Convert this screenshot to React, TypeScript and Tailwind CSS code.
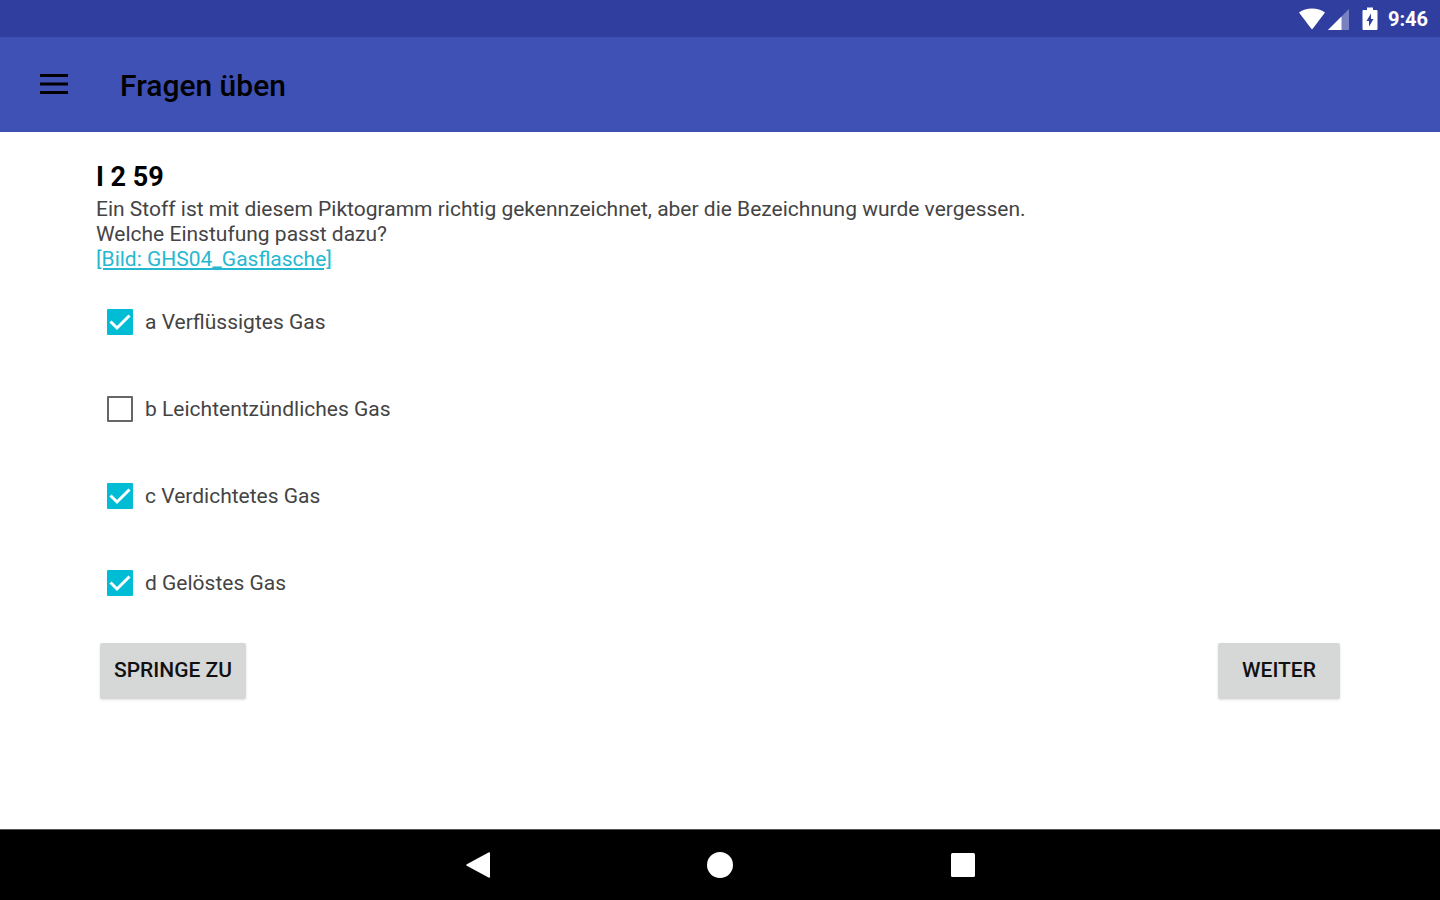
import { useState } from "react";

const answers = [
  { id: "a", text: "Verflüssigtes Gas", checked: true },
  { id: "b", text: "Leichtentzündliches Gas", checked: false },
  { id: "c", text: "Verdichtetes Gas", checked: true },
  { id: "d", text: "Gelöstes Gas", checked: true },
];

function StatusBar() {
  return (
    <div className="flex h-[37px] items-center justify-end bg-[#303f9f] pr-3 text-white">
      <svg className="h-6 w-7" viewBox="0 0 28 24" fill="currentColor" aria-hidden="true">
        <path d="M1 5.500C8 .2 20 .2 27 5.500L14.700 21.800q-.7.800-1.400 0z" />
      </svg>
      <svg className="h-6 w-6" viewBox="0 0 24 24" fill="currentColor" aria-hidden="true">
        <path d="M23 2v21H2z" opacity=".35" />
        <path d="M15.500 9.500V23H2z" />
      </svg>
      <svg className="ml-2 h-6 w-6" viewBox="0 0 24 24" fill="currentColor" aria-hidden="true">
        <path
          fillRule="evenodd"
          d="M9 .5h6V3h3.500q1 0 1 1V22q0 1-1 1h-13q-1 0-1-1V4q0-1 1-1H9zM13 6.500 8.500 14H11v5.500l4.500-7.500H13z"
        />
      </svg>
      <span className="ml-1.5 text-xl font-bold">9:46</span>
    </div>
  );
}

function AppBar() {
  return (
    <header className="flex h-[95px] items-center bg-[#3f51b5] pl-10 text-black">
      <button type="button" aria-label="Menü" className="mr-[52px]">
        <svg className="h-6 w-7" viewBox="0 0 28 24" fill="currentColor" aria-hidden="true">
          <path d="M0 1h28v3H0zM0 9.500h28v3H0zM0 18h28v3H0z" />
        </svg>
      </button>
      <h1 className="pt-0.5 text-[30px] font-medium">Fragen üben</h1>
    </header>
  );
}

function NavBar() {
  return (
    <nav className="flex h-[71px] items-center justify-center gap-[214px] border-t border-[#555] bg-black text-white">
      <button type="button" aria-label="Zurück">
        <svg className="size-7" viewBox="0 0 28 28" fill="currentColor" aria-hidden="true">
          <path d="M24.500 1.500q1.500-.8 1.500.8v23.400q0 1.600-1.500.8L2.800 14.800q-1.300-.8 0-1.600z" />
        </svg>
      </button>
      <button type="button" aria-label="Startbildschirm">
        <svg className="size-7" viewBox="0 0 28 28" fill="currentColor" aria-hidden="true">
          <circle cx="14" cy="14" r="13" />
        </svg>
      </button>
      <button type="button" aria-label="Übersicht">
        <svg className="size-7" viewBox="0 0 28 28" fill="currentColor" aria-hidden="true">
          <rect x="3" y="2" width="24" height="24" rx="1.500" />
        </svg>
      </button>
    </nav>
  );
}

export default function App() {
  const [selected, setSelected] = useState(
    answers.filter((a) => a.checked).map((a) => a.id)
  );

  const toggle = (id: string) => {
    setSelected((prev) =>
      prev.includes(id) ? prev.filter((x) => x !== id) : [...prev, id]
    );
  };

  return (
    <div className="flex min-h-screen flex-col bg-white font-[Roboto,sans-serif]">
      <StatusBar />
      <AppBar />
      <main className="flex-1 px-24 pt-[29px] pb-8">
        <h2 className="mb-1 text-[27px] leading-8 font-bold text-black">I 2 59</h2>
        <p className="text-[21px] leading-[25px] text-[#444]">
          Ein Stoff ist mit diesem Piktogramm richtig gekennzeichnet, aber die
          Bezeichnung wurde vergessen.
          <br />
          Welche Einstufung passt dazu?
          <br />
          <a href="#bild" className="text-[#26b8d0] underline">
            [Bild: GHS04_Gasflasche]
          </a>
        </p>

        <div className="mt-1.5">
          {answers.map((answer) => (
            <label
              key={answer.id}
              className="flex h-[87px] items-center gap-3 pl-[11px] text-[21px] text-[#444]"
            >
              <span className="grid">
                <input
                  type="checkbox"
                  checked={selected.includes(answer.id)}
                  onChange={() => toggle(answer.id)}
                  className="peer col-start-1 row-start-1 size-[26px] appearance-none rounded-[1px] border-2 border-[#666] checked:border-[#00bcd4] checked:bg-[#00bcd4]"
                />
                <svg
                  className="pointer-events-none invisible col-start-1 row-start-1 size-[26px] peer-checked:visible"
                  viewBox="0 0 26 26"
                  fill="none"
                  stroke="#fff"
                  strokeWidth="3"
                  aria-hidden="true"
                >
                  <path d="M3.500 12.500l6.500 6.500L22.500 6.500" />
                </svg>
              </span>
              <span className="pt-0.5">
                {answer.id} {answer.text}
              </span>
            </label>
          ))}
        </div>

        <div className="mt-[17px] flex justify-between px-1">
          <button
            type="button"
            className="h-14 min-w-[122px] rounded-xs bg-[#d6d7d7] px-3.5 text-[21px] font-medium text-[#111] shadow-sm"
          >
            SPRINGE ZU
          </button>
          <button
            type="button"
            className="h-14 min-w-[122px] rounded-xs bg-[#d6d7d7] px-3.5 text-[21px] font-medium text-[#111] shadow-sm"
          >
            WEITER
          </button>
        </div>
      </main>
      <NavBar />
    </div>
  );
}
